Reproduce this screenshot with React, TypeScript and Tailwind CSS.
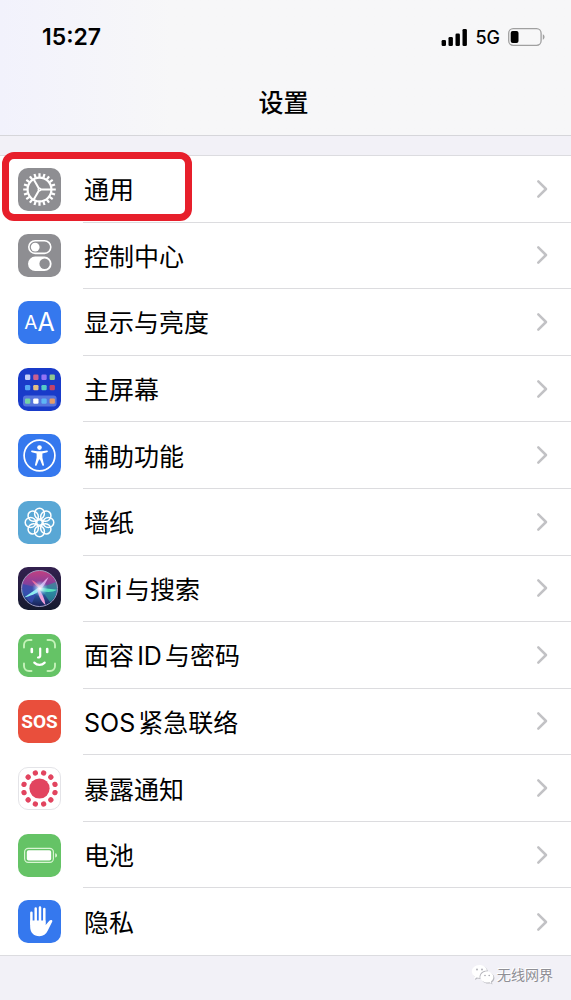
import type { ReactNode } from 'react';
import { clsx } from 'clsx';

function Tile({ className, children }: { className: string; children: ReactNode }) {
  return (
    <span className={clsx('flex size-[43px] shrink-0 items-center justify-center overflow-hidden rounded-[10px]', className)}>
      {children}
    </span>
  );
}

function Glyph({ children }: { children: ReactNode }) {
  return (
    <svg viewBox="0 0 43 43" className="size-full" fill="none" stroke="none" aria-hidden="true">
      {children}
    </svg>
  );
}

const around = (count: number, offset = 0) => Array.from({ length: count }, (_, i) => (360 / count) * i + offset);

function GearIcon() {
  return (
    <Tile className="bg-[#8e8e92]">
      <Glyph>
        <g stroke="#fff">
          {around(20).map((deg) => (
            <path key={deg} d="M21.5 9V5.2" strokeWidth="2.2" transform={`rotate(${deg} 21.5 21.5)`} />
          ))}
          <circle cx="21.5" cy="21.5" r="11.9" strokeWidth="2.2" />
          {around(3, 90).map((deg) => (
            <path key={deg} d="M21.5 20.6V10" strokeWidth="2" transform={`rotate(${deg} 21.5 21.5)`} />
          ))}
          <circle cx="21.5" cy="21.5" r="1.2" strokeWidth="1.6" />
        </g>
      </Glyph>
    </Tile>
  );
}

function ControlCenterIcon() {
  return (
    <Tile className="bg-[#8e8e92]">
      <Glyph>
        <rect x="10.8" y="6.8" width="22" height="12.6" rx="6.3" stroke="#fff" strokeWidth="1.6" />
        <circle cx="17.2" cy="13.1" r="4.4" fill="#fff" />
        <rect x="10" y="22.6" width="23.6" height="14.4" rx="7.2" fill="#fff" />
        <circle cx="26.6" cy="29.8" r="5.2" fill="#8e8e92" />
      </Glyph>
    </Tile>
  );
}

function DisplayIcon() {
  return (
    <Tile className="items-baseline bg-[#3578ee] font-[Inter] leading-[43px] text-white">
      <span className="text-[19px]">A</span>
      <span className="text-[25px]">A</span>
    </Tile>
  );
}

const appColors = [
  ['#c3cdf6', '#c8608f', '#9373f5', '#8fc690'],
  ['#53a5f4', '#e2bd86', '#54cbc8', '#c14369'],
  ['#74d3a5', '#ffffff', '#5db5f5', '#e49c69'],
];
const appRows = [6.6, 17, 30.4];

function HomeScreenIcon() {
  return (
    <Tile className="bg-[#193bc9]">
      <Glyph>
        <rect x="5" y="27.6" width="33.6" height="10.8" rx="3" fill="#5674dd" />
        {appColors.map((row, r) =>
          row.map((color, c) => (
            <rect key={`${r}-${c}`} x={7 + c * 8.2} y={appRows[r]} width="5.3" height="5.3" rx="1.2" fill={color} />
          )),
        )}
      </Glyph>
    </Tile>
  );
}

function AccessibilityIcon() {
  return (
    <Tile className="bg-[#3578ee]">
      <Glyph>
        <circle cx="21.5" cy="21.5" r="15.4" stroke="#fff" strokeWidth="1.7" />
        <circle cx="21.5" cy="13.6" r="2.3" fill="#fff" />
        <path
          d="M14 16.6l5.2.6h4.600l5.200-.6c1.100-.1 1.200 1.400.2 1.600l-4.800 1.300v4.200l1.600 7c.2 1.100-1.200 1.600-1.700.5L22 25.400h-1l-2.300 5.800c-.5 1.100-1.900.6-1.700-.5l1.600-7v-4.200l-4.800-1.300c-1-.2-.9-1.700.2-1.600z"
          fill="#fff"
        />
      </Glyph>
    </Tile>
  );
}

function WallpaperIcon() {
  return (
    <Tile className="bg-[#59a7d5]">
      <Glyph>
        <g stroke="#fff" strokeWidth="1.5">
          {around(8).map((deg) => (
            <ellipse key={deg} cx="21.5" cy="12.600" rx="4.900" ry="5.400" transform={`rotate(${deg} 21.5 21.5)`} />
          ))}
          <circle cx="21.5" cy="21.5" r="2.800" />
        </g>
      </Glyph>
    </Tile>
  );
}

function SiriIcon() {
  return (
    <Tile className="bg-linear-to-b from-[#33204f] to-[#141a2e]">
      <Glyph>
        <defs>
          <linearGradient id="siri-orb" x1="0" y1="0" x2="0" y2="1">
            <stop offset="0" stopColor="#c2407f" />
            <stop offset=".35" stopColor="#8a3f9b" />
            <stop offset=".6" stopColor="#2f63ab" />
            <stop offset="1" stopColor="#171d55" />
          </linearGradient>
          <radialGradient id="siri-glow">
            <stop offset="0" stopColor="#fff" />
            <stop offset=".35" stopColor="#d6ecff" stopOpacity=".7" />
            <stop offset="1" stopColor="#7ec9ff" stopOpacity="0" />
          </radialGradient>
        </defs>
        <circle cx="21.5" cy="21.5" r="18" fill="url(#siri-orb)" />
        <path d="M21 21L4.500 17C4 27 9 33 14 36z" fill="#394bb0" opacity=".8" />
        <path d="M22 21L38 15c3 8-1 17-6 20z" fill="#2b9b9b" opacity=".65" />
        <path d="M22 19.500L6 30.500c5-1 13-4 18-8z" fill="#8deef0" />
        <path d="M20.500 20.500L39 22.800C34 26 26 25 21 23.500z" fill="#58e3bd" />
        <path d="M20 21c4 5 6.500 10 7.500 17-5-4-7.500-10-8-16z" fill="#f0a0da" />
        <path d="M20 21c3-4 6-7 10.500-11-2 5-5 9-8 13z" fill="#dfa5e6" />
        <path d="M23 22c-4-2-7-5-9.500-9 4 2 7.500 4.500 10.500 7.500z" fill="#ec6b9e" />
        <circle cx="22" cy="21.500" r="8" fill="url(#siri-glow)" />
        <circle cx="21.500" cy="21.500" r="18" stroke="#9d9dc2" strokeWidth="1" />
      </Glyph>
    </Tile>
  );
}

function FaceIdIcon() {
  return (
    <Tile className="bg-[#65c366]">
      <Glyph>
        <g strokeLinecap="round">
          <path
            d="M6 13.500V11a5 5 0 0 1 5-5h2.500M29.500 6H32a5 5 0 0 1 5 5v2.500M37 29.500V32a5 5 0 0 1-5 5h-2.500M13.500 37H11a5 5 0 0 1-5-5v-2.500"
            stroke="#c5f3b9"
            strokeWidth="1.900"
          />
          <path d="M13.800 15v3M29.200 15v3" stroke="#fff" strokeWidth="2.600" />
          <path d="M22.200 14.500v7.300c0 1.200-.6 1.700-2.200 1.700M16.300 28.600c3 3 7.400 3 10.400 0" stroke="#fff" strokeWidth="2.200" />
        </g>
      </Glyph>
    </Tile>
  );
}

function SosIcon() {
  return <Tile className="bg-[#e94f3c] font-[Roboto,sans-serif] text-[19px] font-bold text-white">SOS</Tile>;
}

function ExposureIcon() {
  return (
    <Tile className="border border-[#e4e4e8] bg-white">
      <Glyph>
        <g fill="#e2445f">
          <circle cx="21.5" cy="21.5" r="10.6" />
          {around(12, 15).map((deg) => (
            <circle key={deg} cx="21.5" cy="4.700" r="2.800" transform={`rotate(${deg} 21.5 21.5)`} />
          ))}
        </g>
      </Glyph>
    </Tile>
  );
}

function BatteryIcon() {
  return (
    <Tile className="bg-[#65c366]">
      <Glyph>
        <rect x="6.600" y="14.400" width="28.800" height="14" rx="3.600" stroke="#d9f5d3" strokeWidth="1.200" />
        <rect x="8.800" y="16.200" width="24.400" height="10.400" rx="1.800" fill="#fff" />
        <path d="M37.200 19.200c2.400.6 2.400 3.800 0 4.400z" fill="#d9f5d3" />
      </Glyph>
    </Tile>
  );
}

function HandIcon() {
  return (
    <Tile className="bg-[#3578ee]">
      <Glyph>
        <path
          d="M13.400 12.800V24M17.700 8.400V23M22 7.400V23M26.300 9V24"
          stroke="#fff"
          strokeWidth="2.500"
          strokeLinecap="round"
        />
        <path
          d="M12.150 20.500H27.500v4.800l3.800-4.600c1.100-1.300 3.600-.8 3 .7l-4.500 9.200c-1.700 3.600-4.500 5.700-8.300 5.700-6 0-9.350-4-9.350-9.800z"
          fill="#fff"
        />
      </Glyph>
    </Tile>
  );
}

const settings = [
  { label: '通用', Icon: GearIcon, marked: true },
  { label: '控制中心', Icon: ControlCenterIcon },
  { label: '显示与亮度', Icon: DisplayIcon },
  { label: '主屏幕', Icon: HomeScreenIcon },
  { label: '辅助功能', Icon: AccessibilityIcon },
  { label: '墙纸', Icon: WallpaperIcon },
  { label: 'Siri与搜索', Icon: SiriIcon },
  { label: '面容ID与密码', Icon: FaceIdIcon },
  { label: 'SOS紧急联络', Icon: SosIcon },
  { label: '暴露通知', Icon: ExposureIcon },
  { label: '电池', Icon: BatteryIcon },
  { label: '隐私', Icon: HandIcon },
];

function StatusBar() {
  return (
    <div className="flex h-[74px] items-center justify-between pr-[25px] pl-[42px]">
      <span className="text-[23px] font-semibold">15:27</span>
      <div className="flex items-center gap-2">
        <svg viewBox="0 0 26 17" className="h-[17px] w-[26px]" fill="#000" aria-hidden="true">
          <rect x=".6" y="11" width="4.400" height="6" rx="1.300" />
          <rect x="7.500" y="8" width="4.400" height="9" rx="1.300" />
          <rect x="14.500" y="4.500" width="4.400" height="12.500" rx="1.300" />
          <rect x="21.500" y="0" width="4.400" height="17" rx="1.300" />
        </svg>
        <span className="text-[18px] font-medium">5G</span>
        <svg viewBox="0 0 38 18" className="h-[18px] w-[38px]" fill="none" aria-hidden="true">
          <rect x=".7" y=".7" width="32.400" height="16.600" rx="4.500" stroke="#a0a0a0" strokeWidth="1.300" />
          <rect x="2.700" y="3" width="7.800" height="12" rx="2" fill="#000" />
          <path d="M34.800 6.300c2.300.7 2.300 4.700 0 5.400z" fill="#a0a0a0" />
        </svg>
      </div>
    </div>
  );
}

function Chevron() {
  return (
    <svg viewBox="0 0 12 20" className="h-5 w-3 shrink-0" fill="none" stroke="#c2c2c5" strokeWidth="2.500" aria-hidden="true">
      <path d="M2.300 2.300L10 10l-7.700 7.700" strokeLinecap="round" strokeLinejoin="round" />
    </svg>
  );
}

function WeChatMark() {
  return (
    <svg viewBox="0 0 24 20" className="h-5 w-6 drop-shadow-[1px_1px_0px_#b9b9bf]" fill="#fff" aria-hidden="true">
      <path d="M8.500 1C4 1 .8 4 .8 7.500c0 2 1 3.800 2.800 5L3 15l2.600-1.400c1 .3 2 .4 3 .4C8 9.500 11.500 6.500 16 6.500 15.300 3.200 12.200 1 8.500 1z" />
      <path d="M16 7.500c-3.700 0-6.500 2.500-6.500 5.500s2.800 5.500 6.500 5.500c.8 0 1.600-.1 2.300-.3l2.200 1.200-.6-2c1.600-1 2.500-2.600 2.500-4.400 0-3-2.800-5.500-6.400-5.500z" />
      <g fill="#a9a9b0">
        <circle cx="6" cy="5.500" r=".9" />
        <circle cx="11" cy="5.500" r=".9" />
        <circle cx="14" cy="11.500" r=".8" />
        <circle cx="18.200" cy="11.500" r=".8" />
      </g>
    </svg>
  );
}

export default function App() {
  return (
    <div className="flex min-h-screen flex-col bg-[#f2f1f7] font-[Inter,'Noto_Sans_CJK_SC',sans-serif] text-black">
      <header className="border-b border-[#d6d6da] bg-[#f7f7f8] bg-linear-to-r from-[#f2f2fc] to-[#f7f7f8] to-30%">
        <StatusBar />
        <h1 className="flex h-[61px] items-center justify-center pr-1 pb-0.5 text-[25px] leading-none font-medium">设置</h1>
      </header>

      <ul className="mt-[19px] grid flex-1 auto-rows-fr border-y border-[#dcdce0] bg-white">
        {settings.map(({ label, Icon, marked }) => (
          <li key={label} className="group relative flex">
            <a href="#" className="flex flex-1 items-center gap-[22px] pl-[18px]">
              <Icon />
              <span className="flex flex-1 items-center justify-between self-stretch border-b border-[#dcdcdf] pr-[23px] pl-px group-last:border-b-0">
                <span className="pt-1 text-[25px] leading-none [text-autospace:normal]">{label}</span>
                <Chevron />
              </span>
            </a>
            {marked && (
              <span className="pointer-events-none absolute -top-1 left-0.5 h-[69px] w-[190px] rounded-xl border-[7px] border-[#e71f2b]" />
            )}
          </li>
        ))}
      </ul>

      <footer className="flex h-11 items-center justify-end gap-0.5 pr-[18px] pb-2 text-[14px] text-[#8f8f95]">
        <WeChatMark />
        <span className="[text-shadow:-1px_-1px_0_#fff]">无线网界</span>
      </footer>
    </div>
  );
}
